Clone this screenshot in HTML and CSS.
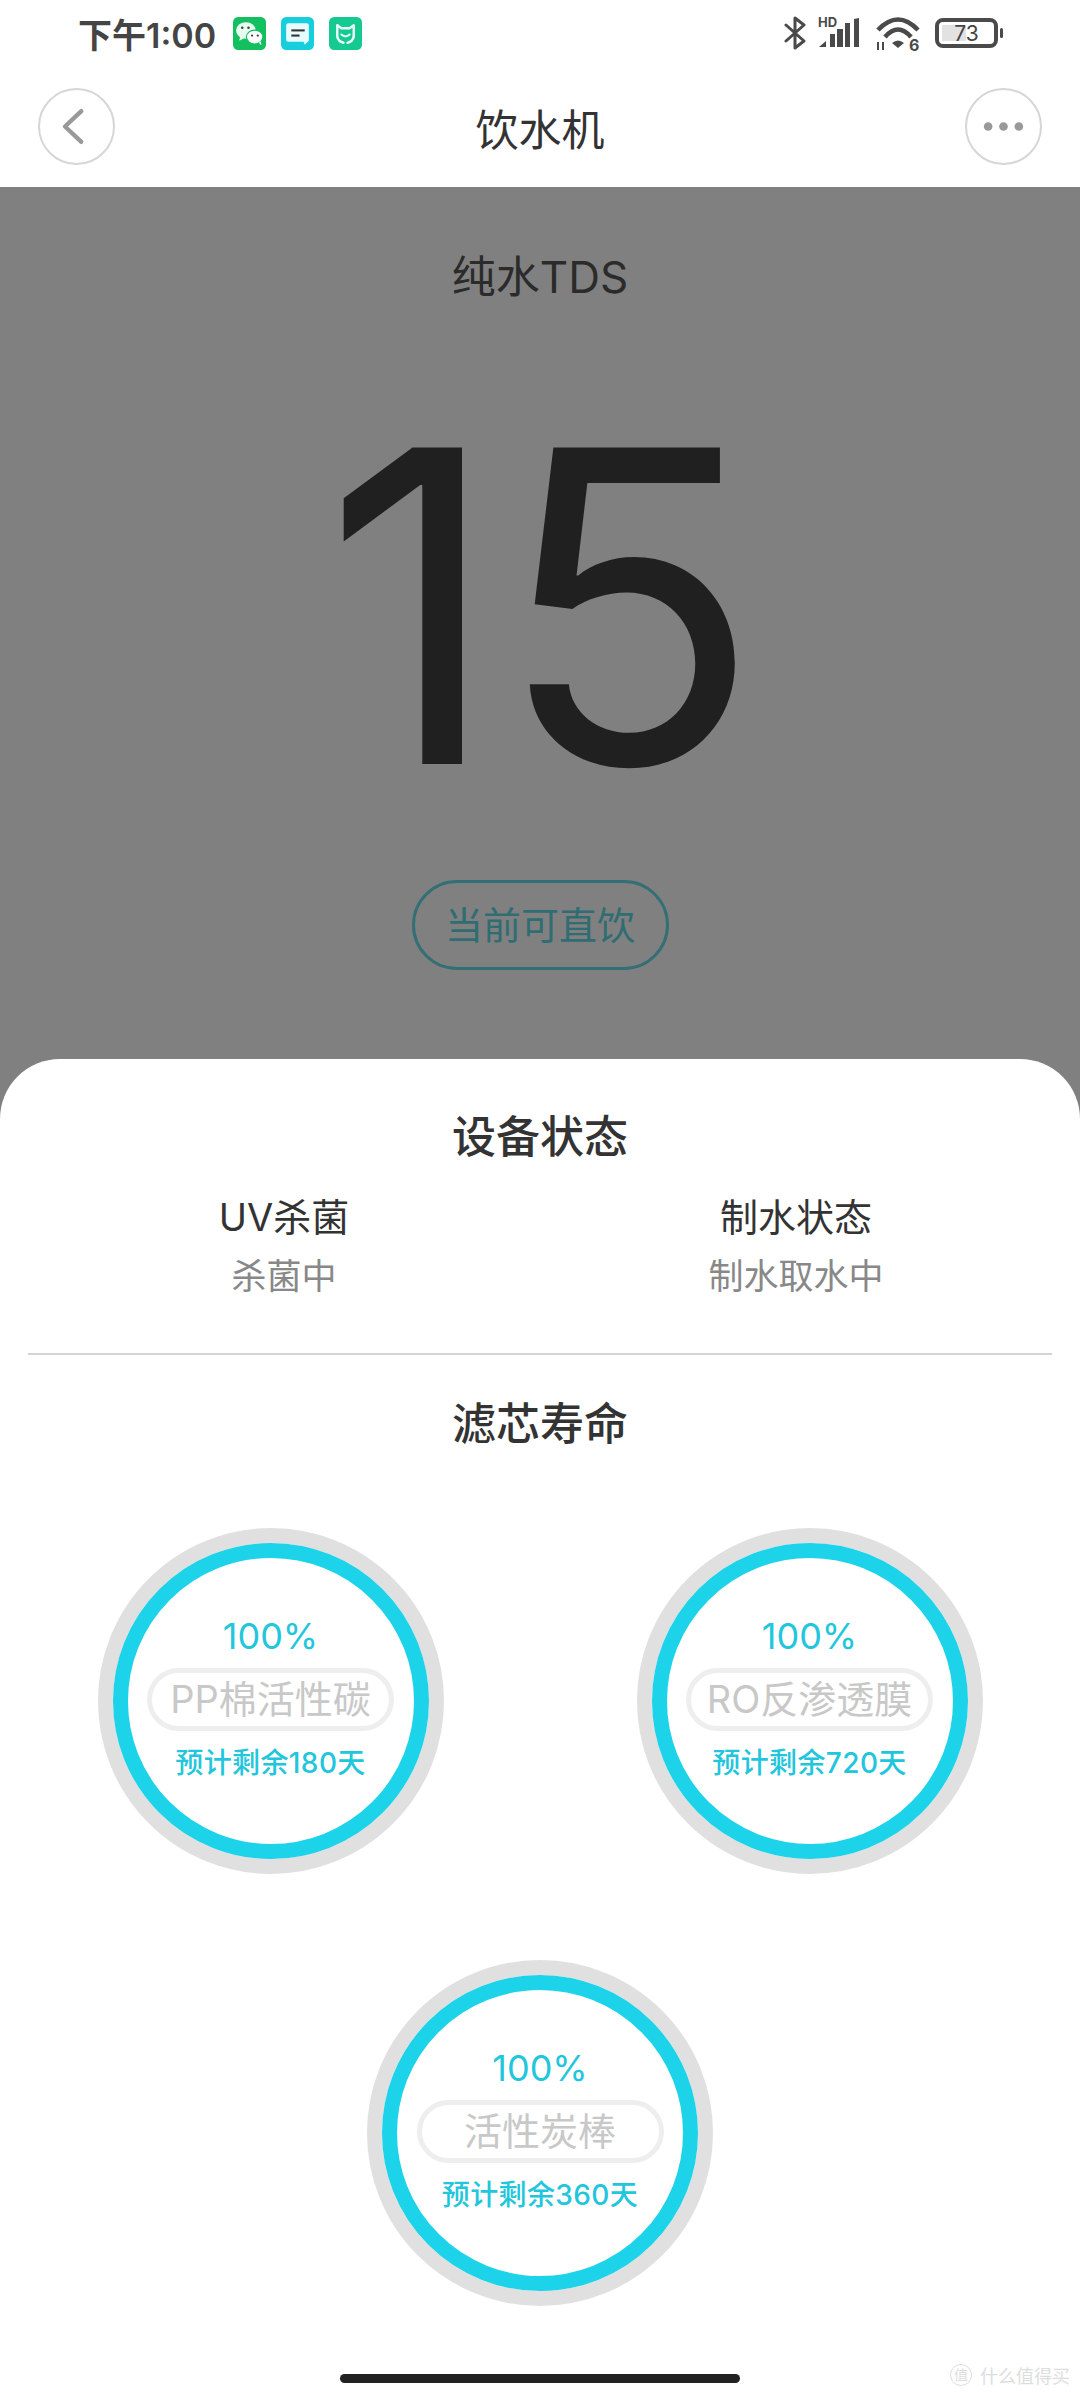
FILE: index.html
```html
<!DOCTYPE html>
<html lang="zh-CN">

<head>
  <meta charset="UTF-8">
  <title>饮水机</title>
  <meta name="viewport" content="width=device-width,initial-scale=1">
  <link rel="stylesheet" href="styles.css">
</head>

<body>
  <div class="page">
    <header class="top">
      <div class="status">
        <div class="status-left">
          <span class="clock">下午1:00</span>
          <!-- notification tiles -->
          <svg class="tile" viewBox="0 0 32 32">
            <rect width="32" height="32" rx="5" fill="#12c060" />
            <ellipse cx="12.5" cy="13" rx="9.5" ry="8" fill="#e8fff0" />
            <path d="M7 19l-1 4 5-2.5z" fill="#e8fff0" />
            <ellipse cx="21" cy="19.5" rx="8" ry="6.8" fill="#fff" stroke="#12c060" stroke-width="1.2" />
            <path d="M25 25l2.5 2.5-.5-4z" fill="#fff" />
            <circle cx="9" cy="10.5" r="1.2" fill="#3a3a3a" />
            <circle cx="15" cy="10.5" r="1.2" fill="#3a3a3a" />
            <circle cx="18.5" cy="18" r="1.1" fill="#3a3a3a" />
            <circle cx="24" cy="18" r="1.1" fill="#3a3a3a" />
          </svg>
          <svg class="tile" viewBox="0 0 32 32">
            <rect width="32" height="32" rx="5" fill="#17cfdc" />
            <path d="M7 6h18a2 2 0 0 1 2 2v15l-4 4-1-3H7a2 2 0 0 1-2-2V8a2 2 0 0 1 2-2z" fill="#e8fbfc" />
            <rect x="10" y="12" width="13" height="2" fill="#333" />
            <rect x="10" y="17" width="8" height="2" fill="#333" />
          </svg>
          <svg class="tile" viewBox="0 0 32 32">
            <rect width="32" height="32" rx="5" fill="#16c990" />
            <path d="M8 8l4 3h8l4-3v11" fill="none" stroke="#e8fff6" stroke-width="2.4" stroke-linejoin="round" />
            <path d="M8 8v11q1 5 6 6M24 19q-1 5-6 6" fill="none" stroke="#e8fff6" stroke-width="2.4" stroke-linecap="round" />
            <path d="M12 17q4 3.5 8 0" fill="none" stroke="#e8fff6" stroke-width="2" stroke-linecap="round" />
          </svg>
        </div>
        <div class="status-right">
          <svg class="ic-bt" viewBox="0 0 22 34" fill="none" stroke="#4a4a4a" stroke-width="3" stroke-linecap="round" stroke-linejoin="round">
            <path d="M2 9l18 16-9 7V2l9 7L2 25" />
          </svg>
          <svg class="ic-signal" viewBox="0 0 44 34">
            <text x="0" y="11" class="hd">HD</text>
            <path d="M1 31l7-6v6zM12 31V18h5v13zM19 31V13h6v18zM27 31V7h5v24zM36 31V3l5-1v29z" fill="#4a4a4a" />
          </svg>
          <svg class="ic-wifi" viewBox="0 0 44 34">
            <path d="M2 14Q22-7 42 14M9 21Q22 6 35 21" fill="none" stroke="#4a4a4a" stroke-width="4.6" />
            <path d="M16 27q6-5 12 0l-6 5z" fill="#4a4a4a" />
            <path d="M2 26v8M7 26v8" stroke="#4a4a4a" stroke-width="2" />
            <text x="33" y="35" class="wifi-six">6</text>
          </svg>
          <div class="battery">
            <div class="battery-level"></div>
            <span class="battery-num">73</span>
          </div>
          <span class="battery-tip"></span>
        </div>
      </div>
      <nav class="nav">
        <button class="round-btn">
          <svg viewBox="0 0 76 76" fill="none" stroke="#999" stroke-width="4.5" stroke-linecap="round" stroke-linejoin="round">
            <path d="M43 22L26 38l17 16" />
          </svg>
        </button>
        <h1 class="title">饮水机</h1>
        <button class="round-btn">
          <svg viewBox="0 0 76 76" fill="#999">
            <circle cx="22" cy="38" r="4.5" />
            <circle cx="38" cy="38" r="4.5" />
            <circle cx="54" cy="38" r="4.5" />
          </svg>
        </button>
      </nav>
    </header>

    <section class="hero">
      <div class="tds-label">纯水TDS</div>
      <div class="tds-value">15</div>
      <div class="tds-state">当前可直饮</div>
    </section>

    <section class="sheet">
      <h2 class="heading">设备状态</h2>
      <div class="states">
        <div class="state">
          <div class="state-name">UV杀菌</div>
          <div class="state-val">杀菌中</div>
        </div>
        <div class="state">
          <div class="state-name">制水状态</div>
          <div class="state-val">制水取水中</div>
        </div>
      </div>
      <hr class="divider">
      <h2 class="heading heading-filter">滤芯寿命</h2>

      <div class="gauges">
        <div class="gauge">
          <div class="gauge-ring">
            <div class="gauge-pct">100%</div>
            <div class="gauge-name">PP棉活性碳</div>
            <div class="gauge-left">预计剩余180天</div>
          </div>
        </div>
        <div class="gauge">
          <div class="gauge-ring">
            <div class="gauge-pct">100%</div>
            <div class="gauge-name">RO反渗透膜</div>
            <div class="gauge-left">预计剩余720天</div>
          </div>
        </div>
        <div class="gauge">
          <div class="gauge-ring">
            <div class="gauge-pct">100%</div>
            <div class="gauge-name">活性炭棒</div>
            <div class="gauge-left">预计剩余360天</div>
          </div>
        </div>
      </div>

      <div class="home-bar"></div>
      <div class="mark">
        <span class="mark-logo">值</span>
        <span>什么值得买</span>
      </div>
    </section>
  </div>
</body>

</html>
```

FILE: styles.css
```css
* {
  box-sizing: border-box;
  margin: 0;
  padding: 0;
  font-family: Inter, "Noto Sans CJK SC", sans-serif
}

:root {
  --dim: #808080;
  --cyan: #1cd3ea;
  --cyan-text: #22c6dc;
  --ink: #333;
  --muted: #888
}

body {
  background: #fff
}

.page {
  width: 1080px;
  height: 2400px;
  overflow: hidden;
  background: var(--dim);
  display: flex;
  flex-direction: column
}

.top {
  background: #fff;
  height: 187px
}

.status {
  display: flex;
  justify-content: space-between;
  align-items: center;
  height: 66px;
  padding: 0 77px 0 78px
}

.status-left {
  display: flex;
  align-items: center
}

.clock {
  font-size: 34px;
  font-weight: 600;
  color: #444;
  width: 155px;
  white-space: nowrap
}

.tile {
  width: 33px;
  height: 33px;
  margin-right: 15px
}

.status-right {
  display: flex;
  align-items: center
}

.ic-bt {
  width: 22px;
  height: 34px;
  margin-right: 12px
}

.ic-signal {
  width: 44px;
  height: 34px;
  margin-right: 14px;
  overflow: visible
}

.hd {
  font-size: 13px;
  font-weight: 700;
  fill: #4a4a4a
}

.ic-wifi {
  width: 44px;
  height: 34px;
  margin-right: 15px;
  overflow: visible
}

.wifi-six {
  font-size: 16px;
  font-weight: 700;
  fill: #4a4a4a
}

.battery {
  position: relative;
  width: 63px;
  height: 30px;
  border: 4px solid #4a4a4a;
  border-radius: 8px;
  display: flex;
  align-items: center;
  justify-content: center
}

.battery-level {
  position: absolute;
  left: 3px;
  top: 3px;
  bottom: 3px;
  width: 24px;
  background: #e2e2e2
}

.battery-num {
  position: relative;
  font-size: 21px;
  color: #444
}

.battery-tip {
  width: 3px;
  height: 10px;
  margin-left: 2px;
  background: #4a4a4a;
  border-radius: 2px
}

.nav {
  display: flex;
  justify-content: space-between;
  align-items: center;
  height: 121px;
  padding: 0 38px
}

.round-btn {
  width: 77px;
  height: 77px;
  background: #fff;
  border: 2px solid #d6d6d6;
  border-radius: 50%
}

.round-btn svg {
  display: block;
  width: 100%;
  height: 100%
}

.title {
  font-size: 43px;
  font-weight: 400;
  color: var(--ink)
}

.hero {
  height: 872px;
  display: flex;
  flex-direction: column;
  align-items: center
}

.tds-label {
  margin-top: 63px;
  font-size: 44px;
  line-height: 54px;
  color: #2b2b2b
}

.tds-value {
  margin-top: 85px;
  font-size: 435px;
  line-height: 435px;
  color: #202020;
  letter-spacing: -4px
}

.tds-state {
  margin-top: 56px;
  width: 257px;
  height: 90px;
  border: 3px solid #336f75;
  border-radius: 45px;
  font-size: 38px;
  line-height: 84px;
  text-align: center;
  color: #2f6d73
}

.sheet {
  position: relative;
  flex: 1;
  background: #fff;
  border-radius: 60px 60px 0 0;
  padding: 46px 28px 0
}

.heading {
  font-size: 44px;
  line-height: 64px;
  font-weight: 500;
  text-align: center;
  color: var(--ink)
}

.heading-filter {
  margin-top: 37px
}

.states {
  display: grid;
  grid-template-columns: 1fr 1fr;
  margin-top: 22px
}

.state {
  text-align: center
}

.state-name {
  font-size: 38px;
  line-height: 52px;
  color: var(--ink)
}

.state-val {
  margin-top: 8px;
  font-size: 35px;
  line-height: 50px;
  color: var(--muted)
}

.divider {
  margin-top: 52px;
  border: none;
  border-top: 2px solid #d4d4d4
}

.gauges {
  display: flex;
  flex-wrap: wrap;
  justify-content: center;
  gap: 86px 193px;
  margin-top: 72px
}

.gauge {
  width: 346px;
  height: 346px;
  border: 15px solid #e0e0e0;
  border-radius: 50%
}

.gauge-ring {
  width: 100%;
  height: 100%;
  border: 15px solid var(--cyan);
  border-radius: 50%;
  background: #fff;
  display: flex;
  flex-direction: column;
  align-items: center;
  justify-content: center;
  padding-bottom: 10px
}

.gauge-pct {
  font-size: 36px;
  line-height: 48px;
  color: var(--cyan-text)
}

.gauge-name {
  margin-top: 8px;
  width: 247px;
  height: 63px;
  border: 5px solid #eee;
  border-radius: 32px;
  font-size: 38px;
  line-height: 52px;
  text-align: center;
  color: #c8c8c8;
  white-space: nowrap
}

.gauge-left {
  margin-top: 14px;
  font-size: 28px;
  font-weight: 500;
  letter-spacing: .4px;
  line-height: 36px;
  color: var(--cyan-text);
  white-space: nowrap
}

.home-bar {
  position: absolute;
  left: 340px;
  bottom: 17px;
  width: 400px;
  height: 9px;
  border-radius: 5px;
  background: #222
}

.mark {
  position: absolute;
  right: 10px;
  bottom: 12px;
  display: flex;
  align-items: center;
  gap: 8px;
  font-size: 18px;
  color: #ddd
}

.mark-logo {
  width: 22px;
  height: 22px;
  border-radius: 50%;
  border: 1px solid #ddd;
  font-size: 14px;
  line-height: 20px;
  text-align: center
}
```
